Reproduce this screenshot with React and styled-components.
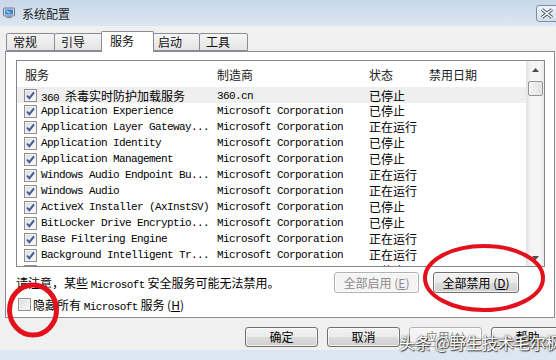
import React from 'react';
import styled, { createGlobalStyle } from 'styled-components';

// fonts: Han text in a sans CJK face, latin names in a mono face (6px per cell)
const HAN = '"Noto Sans CJK SC", "Noto Sans", sans-serif';
const MONO = '"Liberation Mono", "Noto Sans CJK SC", monospace';

const GlobalStyle = createGlobalStyle`
  html, body { margin: 0; padding: 0; }
  body {
    width: 556px;
    height: 360px;
    overflow: hidden;
    background: #f0f0f0;
    font-family: ${HAN};
  }
`;

const services = [
  ['360 杀毒实时防护加载服务', '360.cn', '已停止'],
  ['Application Experience', 'Microsoft Corporation', '已停止'],
  ['Application Layer Gateway...', 'Microsoft Corporation', '正在运行'],
  ['Application Identity', 'Microsoft Corporation', '已停止'],
  ['Application Management', 'Microsoft Corporation', '已停止'],
  ['Windows Audio Endpoint Bu...', 'Microsoft Corporation', '正在运行'],
  ['Windows Audio', 'Microsoft Corporation', '正在运行'],
  ['ActiveX Installer (AxInstSV)', 'Microsoft Corporation', '已停止'],
  ['BitLocker Drive Encryptio...', 'Microsoft Corporation', '已停止'],
  ['Base Filtering Engine', 'Microsoft Corporation', '正在运行'],
  ['Background Intelligent Tr...', 'Microsoft Corporation', '正在运行'],
  ['Computer Browser', 'Microsoft Corporation', '已停止'],
];

const tabs = ['常规', '引导', '服务', '启动', '工具'];

const HAN_RE = /([\u3000-\u9fff\uff00-\uffef]+)/;
// split mixed text so the han runs get the 12px face
const mix = (s) =>
  s.split(HAN_RE).map((p, i) => (HAN_RE.test(p) ? <Han key={i}>{p}</Han> : p));

const Window = styled.div`
  position: relative;
  width: 556px;
  height: 360px;
  overflow: hidden;
  display: flex;
  flex-direction: column;
  background: #f0f0f0;
`;

const TitleBar = styled.div`
  height: 26px;
  flex: none;
  display: flex;
  align-items: center;
  padding-left: 3px;
  background: linear-gradient(#c8d8ea, #dbe6f2);
`;

const Title = styled.span`
  margin-left: 7px;
  font-size: 12px;
  color: #222;
`;

const CloseButton = styled.div`
  margin-left: auto;
  margin-right: -4px;
  align-self: flex-start;
  margin-top: 5px;
  width: 24px;
  height: 17px;
  box-sizing: border-box;
  border: 1px solid #7d8ca0;
  border-radius: 3px;
  background: linear-gradient(#eef3f9, #d3deeb);
  display: flex;
  align-items: center;
  padding-left: 3px;
`;

const TabStrip = styled.div`
  height: 25px;
  flex: none;
  display: flex;
  align-items: flex-end;
  padding-left: 6px;
`;

const Tab = styled.div`
  position: relative;
  box-sizing: border-box;
  width: ${(p) => (p.$active ? 53 : 49)}px;
  height: ${(p) => (p.$active ? 21 : 18)}px;
  margin: 0 ${(p) => (p.$active ? -2 : 0)}px ${(p) => (p.$active ? -1 : 0)}px
    ${(p) => (p.$active ? -2 : -1)}px;
  padding-left: ${(p) => (p.$active ? 8 : 6)}px;
  border: 1px solid #898c95;
  border-bottom: ${(p) => (p.$active ? 'none' : '1px solid #898c95')};
  border-radius: 2px 2px 0 0;
  background: ${(p) => (p.$active ? '#fff' : 'linear-gradient(#f5f5f5, #e4e4e4)')};
  font-size: 12px;
  line-height: ${(p) => (p.$active ? 18 : 16)}px;
  color: #111;
  z-index: ${(p) => (p.$active ? 2 : 0)};
  &:first-child {
    margin-left: 0;
  }
`;

const Panel = styled.div`
  height: 267px;
  flex: none;
  box-sizing: border-box;
  margin: 0 1px 0 5px;
  padding: 8px 9px 0 10px;
  border: 1px solid #898c95;
  background: #fff;
  display: flex;
  flex-direction: column;
`;

const ListBox = styled.div`
  height: 207px;
  box-sizing: border-box;
  border: 1px solid #828790;
  display: flex;
  background: #fff;
`;

const ListMain = styled.div`
  flex: 1;
  overflow: hidden;
`;

const Grid = styled.div`
  display: grid;
  grid-template-columns: 200px 152px 60px 1fr;
  align-items: center;
`;

const Header = styled(Grid)`
  height: 26px;
`;

const HeaderCell = styled.div`
  font-size: 12px;
  color: #1a1a1a;
  padding-left: ${(p) => p.$pad || 0}px;
`;

const Row = styled(Grid)`
  height: 16px;
  background: ${(p) => (p.$selected ? '#efefef' : 'transparent')};
`;

const NameCell = styled.div`
  display: flex;
  align-items: center;
  gap: 4px;
  padding-left: 7px;
  white-space: nowrap;
`;

const Mono = styled.span`
  font-family: ${MONO};
  font-size: 11px;
  letter-spacing: -0.6px;
  color: #000;
  white-space: pre;
`;

const Han = styled.span`
  font-family: ${HAN};
  font-size: 12px;
  letter-spacing: 0;
`;

const StatusCell = styled.div`
  font-size: 12px;
  color: #000;
  line-height: 16px;
`;

const Box = styled.span`
  flex: none;
  width: 13px;
  height: 13px;
  box-sizing: border-box;
  border: 1px solid #8e8f8f;
  background: linear-gradient(135deg, #d6d9de, #fbfbfc);
  box-shadow: inset 0 0 0 1px #f2f3f5;
  display: inline-flex;
  align-items: center;
  justify-content: center;
`;

const ScrollBar = styled.div`
  width: 17px;
  flex: none;
  display: flex;
  flex-direction: column;
  align-items: center;
  border-left: 1px solid #e2e2e2;
  background: linear-gradient(90deg, #e6e6e6, #f6f6f6 25%, #f6f6f6 75%, #eaeaea);
`;

const Arrow = styled.div`
  height: 17px;
  width: 17px;
  display: flex;
  align-items: center;
  justify-content: center;
  margin-top: ${(p) => (p.$down ? 'auto' : 0)};
`;

const Thumb = styled.div`
  margin-top: 3px;
  width: 15px;
  height: 15px;
  box-sizing: border-box;
  border: 1px solid #979797;
  border-radius: 2px;
  background: linear-gradient(90deg, #f4f4f4, #e2e2e2);
`;

const ActionRow = styled.div`
  margin-top: 5px;
  height: 21px;
  display: flex;
  align-items: center;
  font-size: 12px;
  color: #000;
`;

const Note = styled.span`
  white-space: nowrap;
`;

const Actions = styled.div`
  margin-left: auto;
  margin-right: 26px;
  display: flex;
  gap: 14px;
`;

const HideRow = styled.label`
  margin-top: 5px;
  height: 13px;
  padding-left: 2px;
  display: flex;
  align-items: center;
  gap: 2px;
  font-size: 12px;
  color: #000;
`;

const ButtonRow = styled.div`
  margin-top: 9px;
  height: 20px;
  flex: none;
  display: flex;
  justify-content: flex-end;
  gap: 9px;
  margin-right: -8px;
`;

const Button = styled.button`
  flex: none;
  width: ${(p) => p.$w || 73}px;
  height: ${(p) => p.$h || 20}px;
  box-sizing: border-box;
  padding: 0;
  border: 1px solid ${(p) => (p.disabled ? '#adb2b5' : '#707070')};
  border-radius: 3px;
  background: ${(p) =>
    p.disabled
      ? '#f4f4f4'
      : 'linear-gradient(#f2f2f2 0%, #ebebeb 50%, #dddddd 51%, #cfcfcf 100%)'};
  box-shadow: inset 0 0 0 1px rgba(255, 255, 255, 0.7);
  color: ${(p) => (p.disabled ? '#8a8a8a' : '#000')};
  font-family: ${HAN};
  font-size: 12px;
  line-height: 16px;
`;

const FrameBottom = styled.div`
  margin-top: 3px;
  flex: 1;
  background: #dce6f2;
`;

const Marks = styled.svg`
  position: absolute;
  left: 0;
  top: 0;
  pointer-events: none;
`;

const Watermark = styled.div`
  position: absolute;
  left: 399px;
  top: 330px;
  font-size: 16px;
  color: #fff;
  white-space: nowrap;
  text-shadow: 0 0 2px #222, 1px 1px 1px rgba(0, 0, 0, 0.7);
`;

const Check = ({ checked }) => (
  <Box>
    {checked && (
      <svg width="9" height="9" viewBox="0 0 9 9">
        <path d="M1 4.6 L3.4 7.2 L8 1.4" fill="none" stroke="#3f5c96" strokeWidth="1.9" />
      </svg>
    )}
  </Box>
);

const AppIcon = () => (
  <svg width="12" height="12" viewBox="0 0 12 12">
    <rect x="0.5" y="1" width="11" height="8" rx="1" fill="#d5dbe3" stroke="#6d7987" />
    <rect x="2" y="2.5" width="8" height="5" fill="#3d86d8" />
    <path d="M3 4 L7 6" stroke="#cfe6ff" strokeWidth="1" />
    <rect x="3.5" y="9.5" width="5" height="1.6" fill="#7f8a96" />
  </svg>
);

const CloseGlyph = () => (
  <svg width="14" height="11" viewBox="0 0 14 11">
    <path d="M2 1.5 L12 9.5 M12 1.5 L2 9.5" stroke="#4a5563" strokeWidth="3.4" />
    <path d="M2 1.5 L12 9.5 M12 1.5 L2 9.5" stroke="#fff" strokeWidth="1.6" />
  </svg>
);

const Tri = ({ down }) => (
  <svg width="7" height="4" viewBox="0 0 7 4">
    <path d={down ? 'M0 0 L7 0 L3.5 4 Z' : 'M0 4 L7 4 L3.5 0 Z'} fill="#4d4d4d" />
  </svg>
);

export default function App() {
  return (
    <Window>
      <GlobalStyle />
      <TitleBar>
        <AppIcon />
        <Title>系统配置</Title>
        <CloseButton>
          <CloseGlyph />
        </CloseButton>
      </TitleBar>

      <TabStrip>
        {tabs.map((t) => (
          <Tab key={t} $active={t === '服务'}>
            {t}
          </Tab>
        ))}
      </TabStrip>

      <Panel>
        <ListBox>
          <ListMain>
            <Header>
              <HeaderCell $pad={8}>服务</HeaderCell>
              <HeaderCell>制造商</HeaderCell>
              <HeaderCell>状态</HeaderCell>
              <HeaderCell>禁用日期</HeaderCell>
            </Header>
            {services.map(([name, maker, status], i) => (
              <Row key={name} $selected={i === 0}>
                <NameCell>
                  <Check checked />
                  <Mono>{mix(name)}</Mono>
                </NameCell>
                <Mono>{maker}</Mono>
                <StatusCell>{status}</StatusCell>
                <div />
              </Row>
            ))}
          </ListMain>
          <ScrollBar>
            <Arrow>
              <Tri />
            </Arrow>
            <Thumb />
            <Arrow $down>
              <Tri down />
            </Arrow>
          </ScrollBar>
        </ListBox>

        <ActionRow>
          <Note>
            请注意，某些 <Mono>Microsoft</Mono> 安全服务可能无法禁用。
          </Note>
          <Actions>
            <Button $w={85} $h={21} disabled>
              全部启用 (<u>E</u>)
            </Button>
            <Button $w={86} $h={21}>
              全部禁用 (<u>D</u>)
            </Button>
          </Actions>
        </ActionRow>

        <HideRow>
          <Check />
          <span>
            隐藏所有 <Mono>Microsoft</Mono> 服务 (<u>H</u>)
          </span>
        </HideRow>
      </Panel>

      <ButtonRow>
        <Button>确定</Button>
        <Button>取消</Button>
        <Button disabled>应用(A)</Button>
        <Button>帮助</Button>
      </ButtonRow>
      <FrameBottom />

      <Marks width="556" height="360">
        <ellipse cx="484" cy="278" rx="59" ry="32" fill="none" stroke="#e3111b" strokeWidth="4" />
        <ellipse cx="33" cy="310" rx="23.5" ry="25" fill="none" stroke="#e3111b" strokeWidth="5" />
      </Marks>
      <Watermark>头条 @野生技术毛尔枫</Watermark>
    </Window>
  );
}
